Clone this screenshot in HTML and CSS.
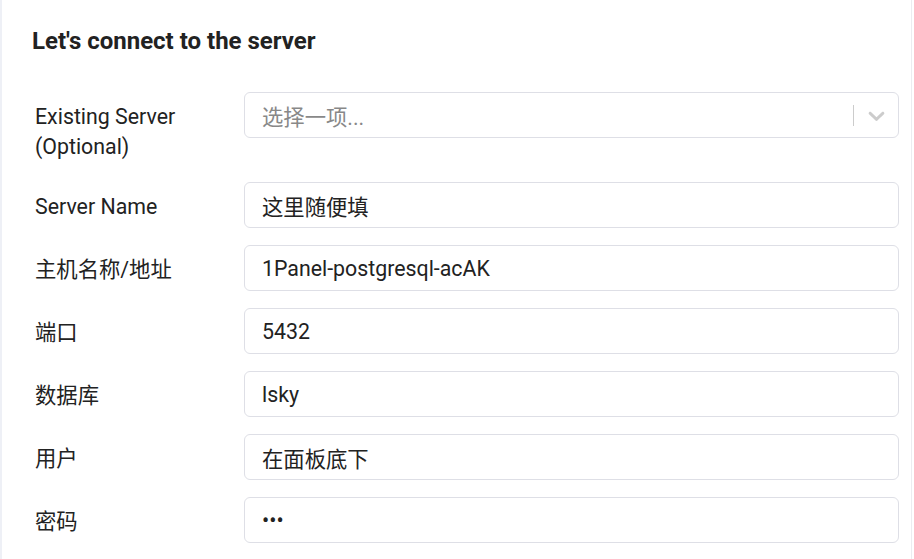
FILE: index.html
```html
<!DOCTYPE html>
<html lang="zh">
<head>
  <meta charset="UTF-8">
  <title>Let's connect to the server</title>
  <link rel="stylesheet" href="styles.css">
</head>
<body>
  <div class="panel">
    <h2 class="title">Let's connect to the server</h2>

    <form class="server-form">
      <div class="form-row">
        <label class="form-label label-tall">Existing Server (Optional)</label>
        <div class="select-box">
          <span class="select-placeholder">选择一项...</span>
          <span class="select-sep"></span>
          <svg class="select-arrow" width="27" height="27" viewBox="0 0 20 20">
            <path d="M4.516 7.548c0.436-0.446 1.043-0.481 1.576 0l3.908 3.747 3.908-3.747c0.533-0.481 1.141-0.446 1.574 0 0.436 0.445 0.408 1.197 0 1.615-0.406 0.418-4.695 4.502-4.695 4.502-0.217 0.223-0.502 0.335-0.787 0.335s-0.570-0.112-0.789-0.335c0 0-4.287-4.084-4.695-4.502s-0.436-1.17 0-1.615z" fill="#cccccc"/>
          </svg>
        </div>
      </div>

      <div class="form-row">
        <label class="form-label">Server Name</label>
        <input class="form-input" type="text" value="这里随便填">
      </div>

      <div class="form-row">
        <label class="form-label">主机名称/地址</label>
        <input class="form-input" type="text" value="1Panel-postgresql-acAK">
      </div>

      <div class="form-row">
        <label class="form-label">端口</label>
        <input class="form-input" type="text" value="5432">
      </div>

      <div class="form-row">
        <label class="form-label">数据库</label>
        <input class="form-input" type="text" value="lsky">
      </div>

      <div class="form-row">
        <label class="form-label">用户</label>
        <input class="form-input" type="text" value="在面板底下">
      </div>

      <div class="form-row">
        <label class="form-label">密码</label>
        <input class="form-input" type="password" value="abc">
      </div>
    </form>
  </div>
</body>
</html>
```

FILE: styles.css
```css
body {
  font-family: Roboto, "Noto Sans CJK SC", sans-serif;
  background: #ffffff;
  margin: 0;
  padding: 0;
  color: #212121;
}

.panel {
  width: 912px;
  min-height: 559px;
  box-sizing: border-box;
  padding: 26px 12px 0 30px;
  border-left: 2px solid #eef0f6;
  border-right: 1px solid #ececf0;
  background: #fff;
}

.title {
  margin: 0 0 36px;
  font-size: 24px;
  line-height: 30px;
  font-weight: 700;
  color: #222;
}

.form-row {
  display: grid;
  grid-template-columns: 212px 1fr;
  align-items: start;
  margin-bottom: 17px;
}

.form-label {
  display: block;
  padding: 10px 0 0 3px;
  font-size: 21.33px;
  line-height: 30px;
  color: #222;
}

.label-tall {
  padding-bottom: 3px;
}

.form-input,
.select-box {
  box-sizing: border-box;
  width: 100%;
  height: 46px;
  border: 1px solid #dedfe6;
  border-radius: 6px;
  background: #fff;
  font-family: Roboto, "Noto Sans CJK SC", sans-serif;
  font-size: 21.33px;
  color: #222;
}

.form-input {
  padding: 0 17px;
  outline: none;
}

.select-box {
  display: flex;
  align-items: center;
  padding: 0 8px 0 17px;
}

.select-placeholder {
  flex: 1;
  color: #888;
}

.select-sep {
  width: 1px;
  height: 21px;
  background: #cccccc;
  margin-right: 9px;
}
```
